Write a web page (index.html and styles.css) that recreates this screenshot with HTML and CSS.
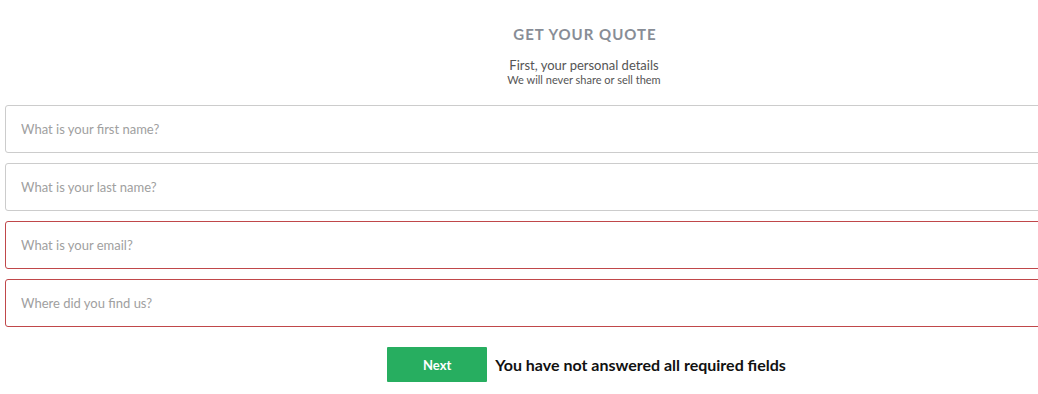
FILE: index.html
```html
<!DOCTYPE html>
<html>
<head>
<meta charset="utf-8">
<link rel="stylesheet" href="styles.css">
</head>
<body>
<div class="page">
  <div class="header">
    <h1 class="title">GET YOUR QUOTE</h1>
    <p class="sub">First, your personal details</p>
    <p class="note">We will never share or sell them</p>
  </div>
  <form class="form">
    <input class="field" type="text" placeholder="What is your first name?">
    <input class="field" type="text" placeholder="What is your last name?">
    <input class="field invalid" type="text" placeholder="What is your email?">
    <input class="field invalid" type="text" placeholder="Where did you find us?">
    <div class="actions">
      <button class="next" type="button">Next</button>
      <span class="msg">You have not answered all required fields</span>
    </div>
  </form>
</div>
</body>
</html>
```
FILE: styles.css
```css
html, body {
  margin: 0;
  padding: 0;
  overflow: hidden;
  background: #fff;
}
body {
  font-family: Lato, "Open Sans", sans-serif;
  width: 1038px;
  height: 394px;
}
.page {
  width: 1168px;
  padding: 0 5px;
  box-sizing: border-box;
}
.header {
  text-align: center;
  padding-top: 25px;
}
.title {
  margin: 0;
  font-size: 15px;
  font-weight: 700;
  letter-spacing: 1px;
  color: #888d96;
  line-height: 18px;
  padding-left: 2px;
}
.sub {
  margin: 15px 0 0;
  font-size: 13px;
  color: #555;
  line-height: 15px;
}
.note {
  margin: 0;
  font-size: 11px;
  color: #555;
  line-height: 13px;
}
.form {
  margin-top: 19px;
  display: flex;
  flex-direction: column;
  gap: 10px;
}
.field {
  display: block;
  width: 100%;
  height: 48px;
  box-sizing: border-box;
  border: 1px solid #cccccc;
  border-radius: 3px;
  padding: 0 15px;
  font-family: Lato, sans-serif;
  font-size: 13px;
  color: #333;
  outline: none;
}
.field::placeholder {
  color: #a0a0a0;
}
.field.invalid {
  border-color: #c0474a;
}
.actions {
  margin-top: 10px;
  display: flex;
  justify-content: center;
  align-items: center;
  gap: 8px;
  padding-left: 5px;
}
.next {
  width: 100px;
  height: 35px;
  border: 0;
  border-radius: 1px;
  background: #27ae60;
  color: #fff;
  font-family: Lato, sans-serif;
  font-weight: 700;
  font-size: 13px;
}
.msg {
  font-size: 16px;
  font-weight: 700;
  color: #111;
}
```
